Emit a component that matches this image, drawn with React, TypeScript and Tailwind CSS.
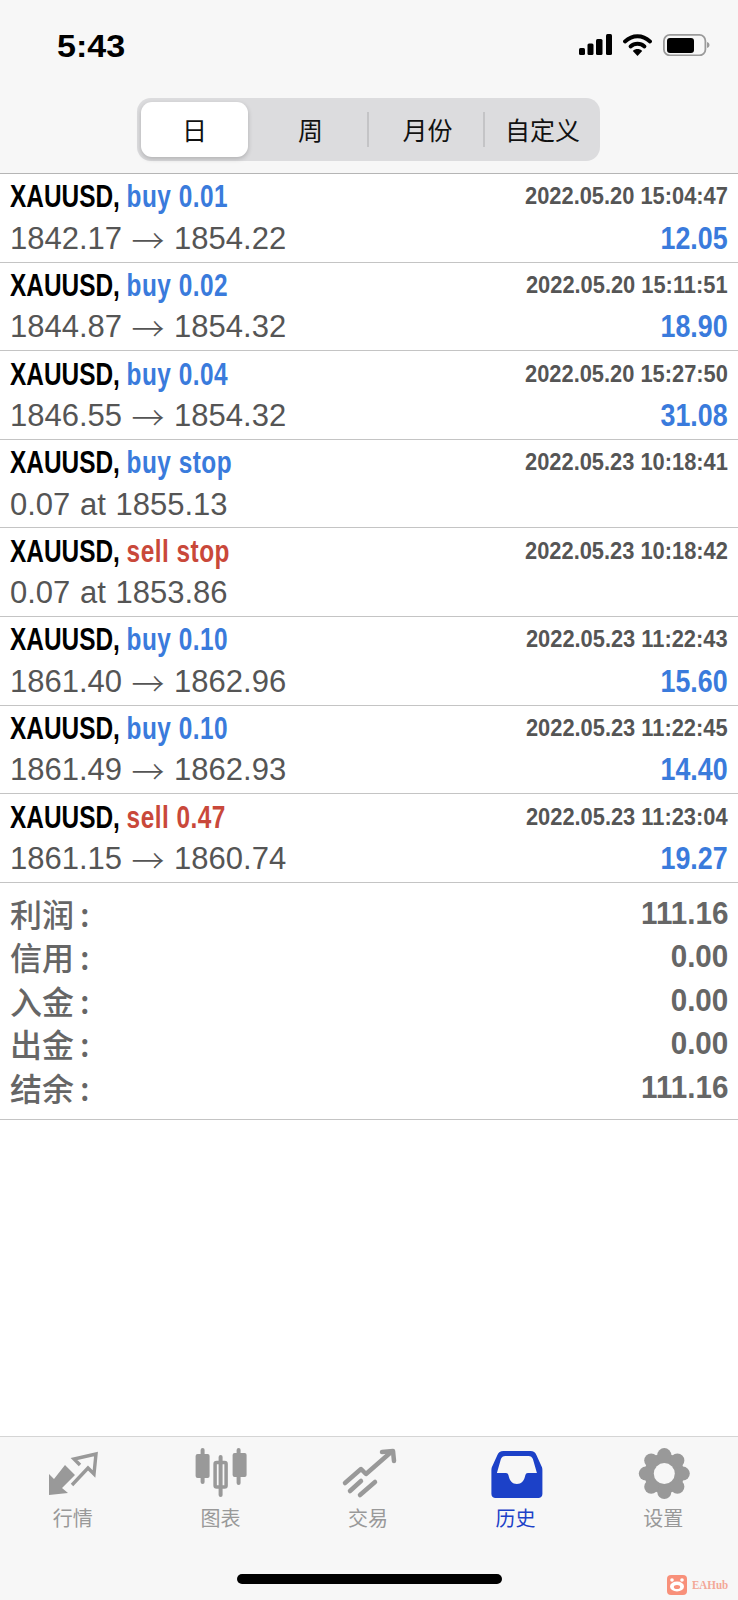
const sans = "font-['Liberation_Sans','Noto_Sans_CJK_SC',sans-serif]";
const cjk = "font-['Noto_Sans_CJK_SC',sans-serif]";

const BLUE = "text-[#3a7bdc]";
const RED = "text-[#c9483a]";

type Row = { kind: string; sell?: boolean; time: string; left: string; right?: string; profit?: string };

const rows: Row[] = [
  { kind: "buy 0.01", time: "2022.05.20 15:04:47", left: "1842.17", right: "1854.22", profit: "12.05" },
  { kind: "buy 0.02", time: "2022.05.20 15:11:51", left: "1844.87", right: "1854.32", profit: "18.90" },
  { kind: "buy 0.04", time: "2022.05.20 15:27:50", left: "1846.55", right: "1854.32", profit: "31.08" },
  { kind: "buy stop", time: "2022.05.23 10:18:41", left: "0.07 at 1855.13" },
  { kind: "sell stop", sell: true, time: "2022.05.23 10:18:42", left: "0.07 at 1853.86" },
  { kind: "buy 0.10", time: "2022.05.23 11:22:43", left: "1861.40", right: "1862.96", profit: "15.60" },
  { kind: "buy 0.10", time: "2022.05.23 11:22:45", left: "1861.49", right: "1862.93", profit: "14.40" },
  { kind: "sell 0.47", sell: true, time: "2022.05.23 11:23:04", left: "1861.15", right: "1860.74", profit: "19.27" },
];

const totals = [
  ["利润", "111.16"],
  ["信用", "0.00"],
  ["入金", "0.00"],
  ["出金", "0.00"],
  ["结余", "111.16"],
];

function Tab({ label, active, children }: { label: string; active?: boolean; children: React.ReactNode }) {
  return (
    <div className="flex flex-col items-center">
      <svg width="60" height="54" viewBox="0 0 60 54" className="block">
        {children}
      </svg>
      <div className={`mt-[6px] -translate-x-[1px] text-[20px] leading-[24px] ${active ? "text-[#1c41c8]" : "text-[#999999]"}`}>{label}</div>
    </div>
  );
}

const gearAngles = [0, 45, 90, 135, 180, 225, 270, 315];

export default function App() {
  return (
    <div className={`${sans} w-[738px] h-[1600px] bg-white flex flex-col overflow-hidden`}>
      <div className="h-[174px] bg-[#f7f7f7] border-b border-[#b5b5b5] shrink-0">
        <div className="h-[98px] flex items-start justify-between pl-[57px] pr-[28px] pt-[29px]">
          <div className="origin-left scale-x-[1.1] text-[31px] leading-[36px] font-bold text-black">5:43</div>
          <div className="flex items-start gap-[11px] pt-[5px]">
            <svg width="33" height="22" viewBox="0 0 33 22" fill="#000">
              <rect x="0" y="14" width="6" height="7" rx="1.5" />
              <rect x="8.500" y="9.500" width="6" height="11.500" rx="1.5" />
              <rect x="17" y="5" width="6.500" height="16" rx="1.5" />
              <rect x="27" y="0" width="6" height="21" rx="1.5" />
            </svg>
            <svg width="29" height="22" viewBox="0 0 29 22">
              <path d="M2 7.500C9.500 0.500 19.500 0.500 27 7.500" fill="none" stroke="#000" strokeWidth="3.8" strokeLinecap="round" />
              <path d="M7.500 12.500C11.500 8.800 17.500 8.800 21.500 12.500" fill="none" stroke="#000" strokeWidth="3.8" strokeLinecap="round" />
              <path d="M9.800 17C12.500 14.400 16.500 14.400 19.200 17L14.500 22Z" fill="#000" />
            </svg>
            <svg width="47" height="22" viewBox="0 0 47 22">
              <rect x="0.900" y="0.900" width="41.500" height="20.500" rx="6" fill="none" stroke="#9a9a9a" strokeWidth="1.8" />
              <rect x="4" y="4" width="27" height="15" rx="3" fill="#000" />
              <path d="M44 8c1.500.4 2.500 1.500 2.500 3s-1 2.600-2.500 3z" fill="#9a9a9a" />
            </svg>
          </div>
        </div>
        <div className={`${cjk} ml-[137px] w-[463px] h-[63px] rounded-[14px] bg-[#dcdcde] flex items-center pl-[4px] pr-[3px] text-[25px] leading-none text-[#111] pb-[1px]`}>
          <div className="w-[107px] h-[55px] rounded-[11px] bg-white shadow-[0_2px_5px_rgba(0,0,0,0.2)] flex items-center justify-center">日</div>
          <div className="w-[121px] h-[35px] flex items-center justify-center border-r-2 border-[#c4c4c6] pl-[6px]">周</div>
          <div className="w-[116px] h-[35px] flex items-center justify-center border-r-2 border-[#c4c4c6] pl-[3px]">月份</div>
          <div className="flex-1 h-[35px] flex items-center justify-center whitespace-nowrap pl-[3px]">自定义</div>
        </div>
      </div>

      <div className="shrink-0">
        {rows.map((r, i) => (
          <div key={i} className="h-[88.6px] border-b border-[#c4c4c4] pl-[10px] pr-[10px] pt-[2.4px] flex flex-col overflow-hidden">
            <div className="flex justify-between items-start h-[42.5px] whitespace-nowrap">
              <div className="origin-left scale-x-[0.8] text-[30.5px] font-bold leading-[41px] text-black">
                XAUUSD, <span className={`tracking-[0.6px] ${r.sell ? RED : BLUE}`}>{r.kind}</span>
              </div>
              <div className="origin-right scale-x-[0.91] text-[24px] font-bold leading-[40px] text-[#555555]">{r.time}</div>
            </div>
            <div className="flex justify-between items-start h-[40px] whitespace-nowrap">
              <div className="flex items-center text-[31px] leading-[40px] text-[#555555] [word-spacing:1px]">
                <span>{r.left}</span>
                {r.right && (
                  <>
                    <span className={`${cjk} w-[52px] text-center text-[33px] font-light leading-[40px]`}>→</span>
                    <span>{r.right}</span>
                  </>
                )}
              </div>
              {r.profit && <div className={`origin-right scale-x-[0.865] text-[31px] font-bold leading-[40px] ${BLUE}`}>{r.profit}</div>}
            </div>
          </div>
        ))}
      </div>

      <div className="border-b border-[#c4c4c4] pl-[10px] pr-[10px] pt-[8px] pb-[11px] text-[#666666] shrink-0">
        {totals.map(([k, v]) => (
          <div key={k} className="flex justify-between items-center h-[43.5px] whitespace-nowrap">
            <div className={`${cjk} text-[32px] font-medium`}>
              {k}
              <span className="ml-[6px]">:</span>
            </div>
            <div className="origin-right scale-x-[0.925] text-[32px] font-bold">{v}</div>
          </div>
        ))}
      </div>

      <div className="flex-1" />

      <div className="h-[164px] shrink-0 bg-[#f7f7f7] border-t border-[#d5d5d5] flex flex-col">
        <div className={`${cjk} grid grid-cols-5 pt-[9px]`}>
          <Tab label="行情">
            <path d="M5 28L10 33L21 19L31 29L18 42L24 47L5 49Z" fill="#999999" />
            <path d="M36 19L30 13L52 8L50 28L44 22L28 39" fill="none" stroke="#999999" strokeWidth="3.400" />
          </Tab>
          <Tab label="图表">
            <g fill="#999999" transform="translate(4.600 2)">
              <rect x="5" y="0" width="4" height="36" rx="2" />
              <rect x="0" y="6" width="14" height="24" rx="2" />
              <rect x="23" y="7" width="4" height="42" rx="2" />
              <rect x="19.500" y="14.500" width="11" height="24.500" rx="1.500" fill="none" stroke="#999999" strokeWidth="3.500" />
              <rect x="41" y="0" width="4" height="37" rx="2" />
              <rect x="37" y="5" width="14" height="24" rx="2" />
            </g>
          </Tab>
          <Tab label="交易">
            <g fill="none" stroke="#999999" strokeWidth="4.500" strokeLinecap="round" strokeLinejoin="round">
              <path d="M6 37L22 23L27 28L51 7" />
              <path d="M43 6L54 5L55 15" />
              <path d="M11 45L22 35" />
              <path d="M21 49L36 36" />
            </g>
          </Tab>
          <Tab label="历史" active>
            <g transform="translate(4.400 5)">
              <path
                fill="#1c41c8"
                fillRule="evenodd"
                d="M12 0H39C42 0 44 1.500 45 4L50 15C51 17 51 18 51 20V43C51 45.500 49 47 47 47H4C2 47 0 45.500 0 43V20C0 18 0 17 1 15L6 4C7 1.500 9 0 12 0ZM14 5C11.500 5 10.500 6 9.500 8L5.500 22H14.500C16 22 16.500 22.700 17 24C18.200 30 21 33 25.500 33C30 33 32.800 30 34 24C34.500 22.700 35 22 36.500 22H45.500L41.500 8C40.500 6 39.500 5 37 5Z"
              />
            </g>
          </Tab>
          <Tab label="设置">
            <g fill="#999999">
              <circle cx="30.300" cy="27.600" r="20" />
              {gearAngles.map((a) => (
                <circle key={a} cx="30.300" cy="27.600" r="7" transform={`rotate(${a} 30.300 27.600) translate(0 -18.500)`} />
              ))}
              <circle cx="30.300" cy="27.600" r="10.500" fill="#f7f7f7" />
            </g>
          </Tab>
        </div>
        <div className="relative flex-1">
          <div className="absolute left-[237px] top-[44px] w-[265px] h-[10px] rounded-full bg-black" />
          <div className="absolute left-[667px] top-[45px] flex items-center gap-[5px]">
            <svg width="20" height="20" viewBox="0 0 20 20">
              <rect width="20" height="20" rx="4" fill="#f8907a" />
              <circle cx="5" cy="5" r="1.800" fill="#fff" />
              <circle cx="15" cy="5" r="1.800" fill="#fff" />
              <ellipse cx="10" cy="11.500" rx="7" ry="5" fill="#fff" />
              <ellipse cx="10" cy="12" rx="3.200" ry="2" fill="#f8907a" />
            </svg>
            <span className="origin-left scale-x-[0.85] text-[13px] leading-[16px] font-bold text-[#f3a898] font-['Liberation_Serif',serif]">EAHub</span>
          </div>
        </div>
      </div>
    </div>
  );
}
